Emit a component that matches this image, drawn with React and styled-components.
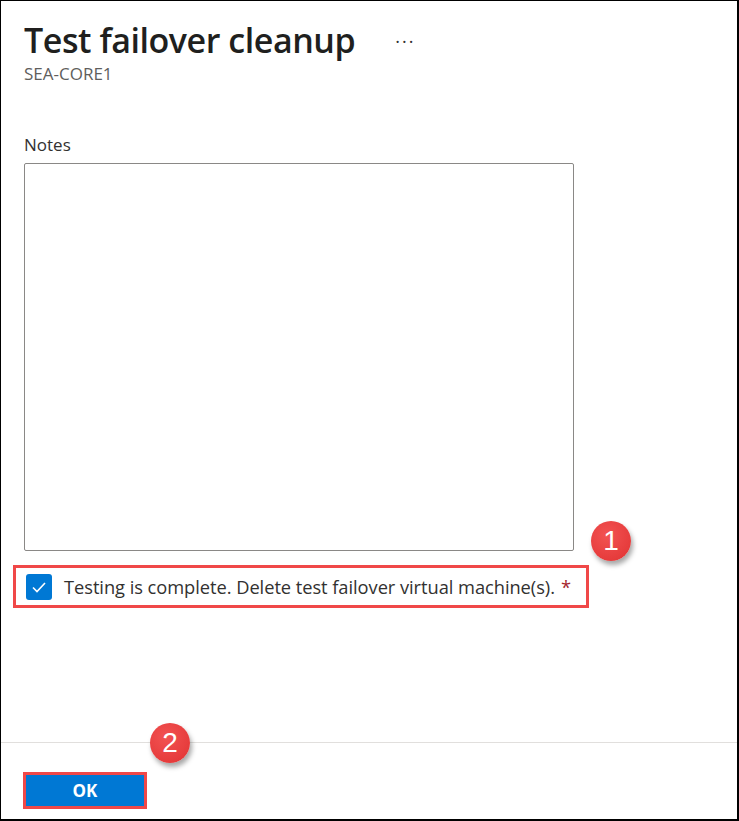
import styled, { createGlobalStyle } from "styled-components";

const GlobalStyle = createGlobalStyle`
  html, body {
    margin: 0;
    padding: 0;
    background: #fff;
  }
  * {
    box-sizing: border-box;
  }
`;

const Frame = styled.div`
  display: flex;
  flex-direction: column;
  width: 739px;
  height: 821px;
  border-style: solid;
  border-color: #000;
  border-width: 1px 2px 2px 1px;
  font-family: "Open Sans", "Noto Sans", sans-serif;
  color: #323130;
`;

const Content = styled.div`
  flex: 1;
  padding: 18px 0 0 23px;
`;

const Header = styled.div`
  display: flex;
  align-items: center;
  gap: 40px;
`;

const Title = styled.h1`
  margin: 0;
  font-size: 34px;
  line-height: 42px;
  font-weight: 600;
  letter-spacing: -0.45px;
  color: #201f1e;
`;

const More = styled.span`
  font-size: 18px;
  letter-spacing: 2px;
  color: #323130;
  margin-top: 2px;
`;

const Subtitle = styled.div`
  font-size: 17px;
  line-height: 22px;
  color: #605e5c;
  margin-top: 2px;
`;

const Label = styled.label`
  display: block;
  margin-top: 48px;
  font-size: 17px;
  line-height: 24px;
  color: #323130;
`;

const NotesBox = styled.textarea`
  display: block;
  margin-top: 6px;
  width: 550px;
  height: 388px;
  border: 1px solid #8a8886;
  border-radius: 2px;
  resize: none;
  outline: none;
  font-family: inherit;
`;

const Highlight = styled.div`
  position: relative;
  display: flex;
  align-items: center;
  gap: 12px;
  width: 576px;
  height: 43px;
  margin: 14px 0 0 -11px;
  padding-left: 10px;
  border: 3px solid #f04848;
`;

const Check = styled.span`
  display: flex;
  align-items: center;
  justify-content: center;
  width: 26px;
  height: 26px;
  border-radius: 3px;
  background: #0078d4;
`;

const CheckText = styled.span`
  font-size: 18.3px;
  letter-spacing: -0.05px;
  color: #323130;
`;

const Required = styled.span`
  color: #a4262c;
  margin-left: 6px;
`;

const Badge = styled.span`
  position: absolute;
  left: ${({ $left }) => $left}px;
  top: ${({ $top }) => $top}px;
  display: flex;
  align-items: center;
  justify-content: center;
  width: 40px;
  height: 40px;
  border-radius: 50%;
  background: radial-gradient(circle at 40% 35%, #f25252 0%, #e63c3c 70%, #d83434 100%);
  box-shadow: 2px 4px 5px rgba(0, 0, 0, 0.35);
  color: #fff;
  font-family: "Liberation Sans", Arial, sans-serif;
  font-size: 28px;
  line-height: 1;
`;

const Footer = styled.div`
  position: relative;
  height: 77px;
  border-top: 1px solid #e1dfdd;
  padding: 29px 0 0 22px;
`;

const OkButton = styled.button`
  width: 124px;
  height: 37px;
  border: 3px solid #f04848;
  background: #0078d4;
  color: #fff;
  font-family: "Open Sans", "Noto Sans", sans-serif;
  font-size: 17px;
  font-weight: 700;
  padding: 0;
`;

export default function App() {
  return (
    <Frame>
      <GlobalStyle />
      <Content>
        <Header>
          <Title>Test failover cleanup</Title>
          <More>···</More>
        </Header>
        <Subtitle>SEA-CORE1</Subtitle>
        <Label>Notes</Label>
        <NotesBox />
        <Highlight>
          <Check>
            <svg width="18" height="18" viewBox="0 0 18 18">
              <path d="M3 9.5 L7 13.5 L15 5" fill="none" stroke="#fff" strokeWidth="1.6" />
            </svg>
          </Check>
          <CheckText>
            Testing is complete. Delete test failover virtual machine(s).
            <Required>*</Required>
          </CheckText>
          <Badge $left={575} $top={-47}>1</Badge>
        </Highlight>
      </Content>
      <Footer>
        <Badge $left={149} $top={-20}>2</Badge>
        <OkButton>OK</OkButton>
      </Footer>
    </Frame>
  );
}
